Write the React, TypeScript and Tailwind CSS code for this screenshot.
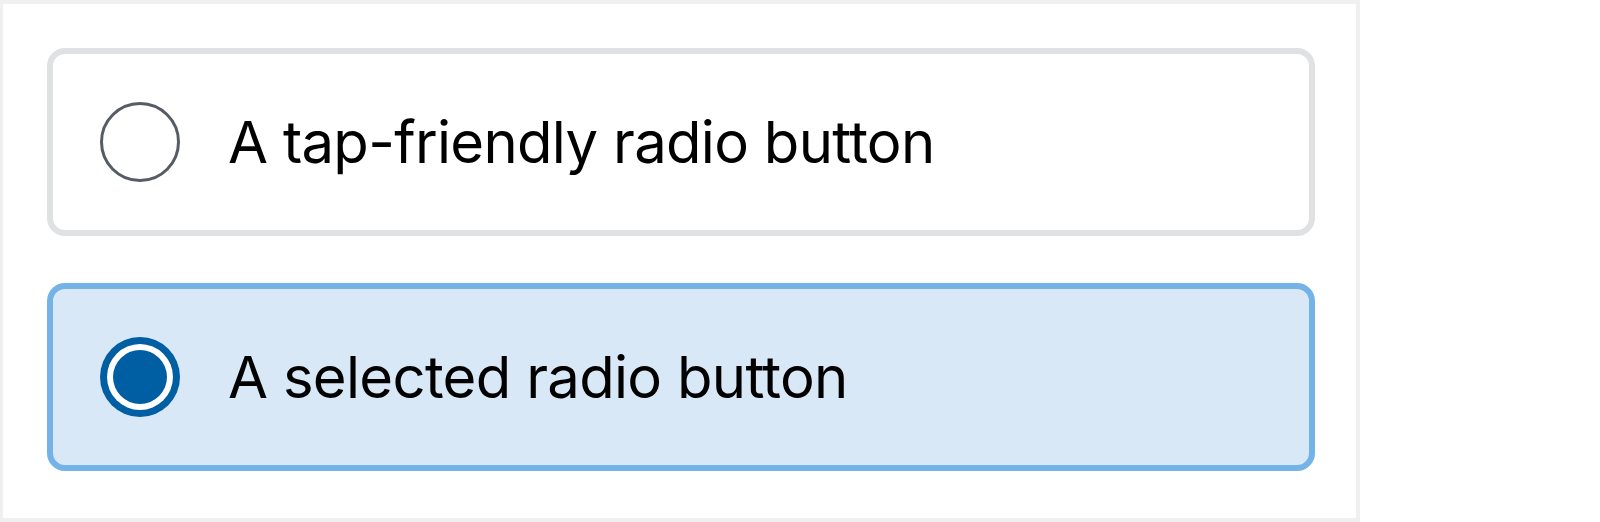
import React from 'react';

interface TileProps {
  label: string;
  selected?: boolean;
}

const RadioTile: React.FC<TileProps> = ({ label, selected }) => {
  return (
    <label
      className={`flex items-center w-[1268px] h-[188px] rounded-[18px] border-[6px] pl-[47px] gap-[48px] ${
        selected ? 'bg-[#d9e8f6] border-[#73b3e7]' : 'bg-white border-[#dfe1e2]'
      }`}
    >
      {selected ? (
        <span className="flex w-[80px] h-[80px] rounded-full bg-[#005ea2] p-[7px] shrink-0">
          <span className="flex w-full h-full rounded-full bg-white p-[6px]">
            <span className="w-full h-full rounded-full bg-[#005ea2]" />
          </span>
        </span>
      ) : (
        <span className="w-[80px] h-[80px] rounded-full border-[3px] border-[#565c65] bg-white shrink-0" />
      )}
      <span className="text-[58px] leading-none text-black font-['Inter',sans-serif] tracking-[-0.012em]">
        {label}
      </span>
    </label>
  );
};

export default function App() {
  return (
    <div className="w-[1600px] h-[522px] bg-white">
      <div className="w-[1360px] h-[522px] border-[#f0f0f0] border-4 border-l-[3px] flex flex-col pl-[44px] pt-[44px] gap-[47px]">
        <RadioTile label="A tap-friendly radio button" />
        <RadioTile label="A selected radio button" selected />
      </div>
    </div>
  );
}
